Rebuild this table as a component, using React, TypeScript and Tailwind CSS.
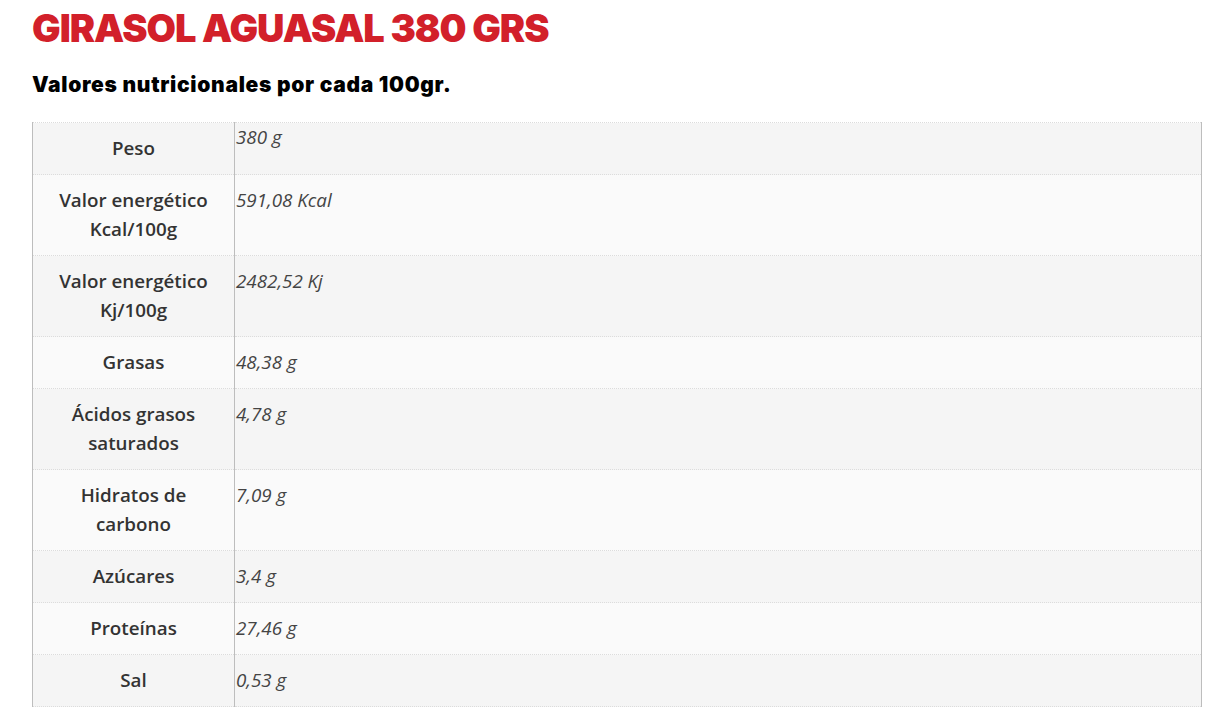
const rows: [string[], string][] = [
  [['Peso'], '380 g'],
  [['Valor energético', 'Kcal/100g'], '591,08 Kcal'],
  [['Valor energético', 'Kj/100g'], '2482,52 Kj'],
  [['Grasas'], '48,38 g'],
  [['Ácidos grasos', 'saturados'], '4,78 g'],
  [['Hidratos de', 'carbono'], '7,09 g'],
  [['Azúcares'], '3,4 g'],
  [['Proteínas'], '27,46 g'],
  [['Sal'], '0,53 g'],
];

export default function App() {
  return (
    <div className="min-h-screen bg-white px-8 pt-[7px]">
      <h1 className="font-['Inter',sans-serif] text-[38px] font-black leading-[42px] tracking-[-1px] text-[#d2202a]">
        GIRASOL AGUASAL 380 GRS
      </h1>
      <h2 className="mt-[22px] font-['Inter',sans-serif] text-[21px] font-black leading-[28px] tracking-[0.7px] text-black">
        Valores nutricionales por cada 100gr.
      </h2>
      <table className="mt-[23px] w-[1170px] border-collapse font-['Open_Sans',sans-serif] text-[18.8px] leading-[29px] text-[#333]">
        <tbody>
          {rows.map(([label, value], i) => (
            <tr
              key={i}
              className={`border-y border-dotted border-[#dcdcdc] ${i % 2 === 0 ? 'bg-[#f5f5f5]' : 'bg-[#fafafa]'}`}
            >
              <td className="w-[202px] border-x border-solid border-[#bdbdbd] py-[11px] text-center align-middle font-semibold">
                {label.map((l) => (
                  <div key={l}>{l}</div>
                ))}
              </td>
              <td
                className={`border-r border-solid border-[#bdbdbd] pl-px align-top italic text-[#444] ${i === 0 ? 'pt-0' : 'pt-[11px]'}`}
              >
                {value}
              </td>
            </tr>
          ))}
        </tbody>
      </table>
    </div>
  );
}
